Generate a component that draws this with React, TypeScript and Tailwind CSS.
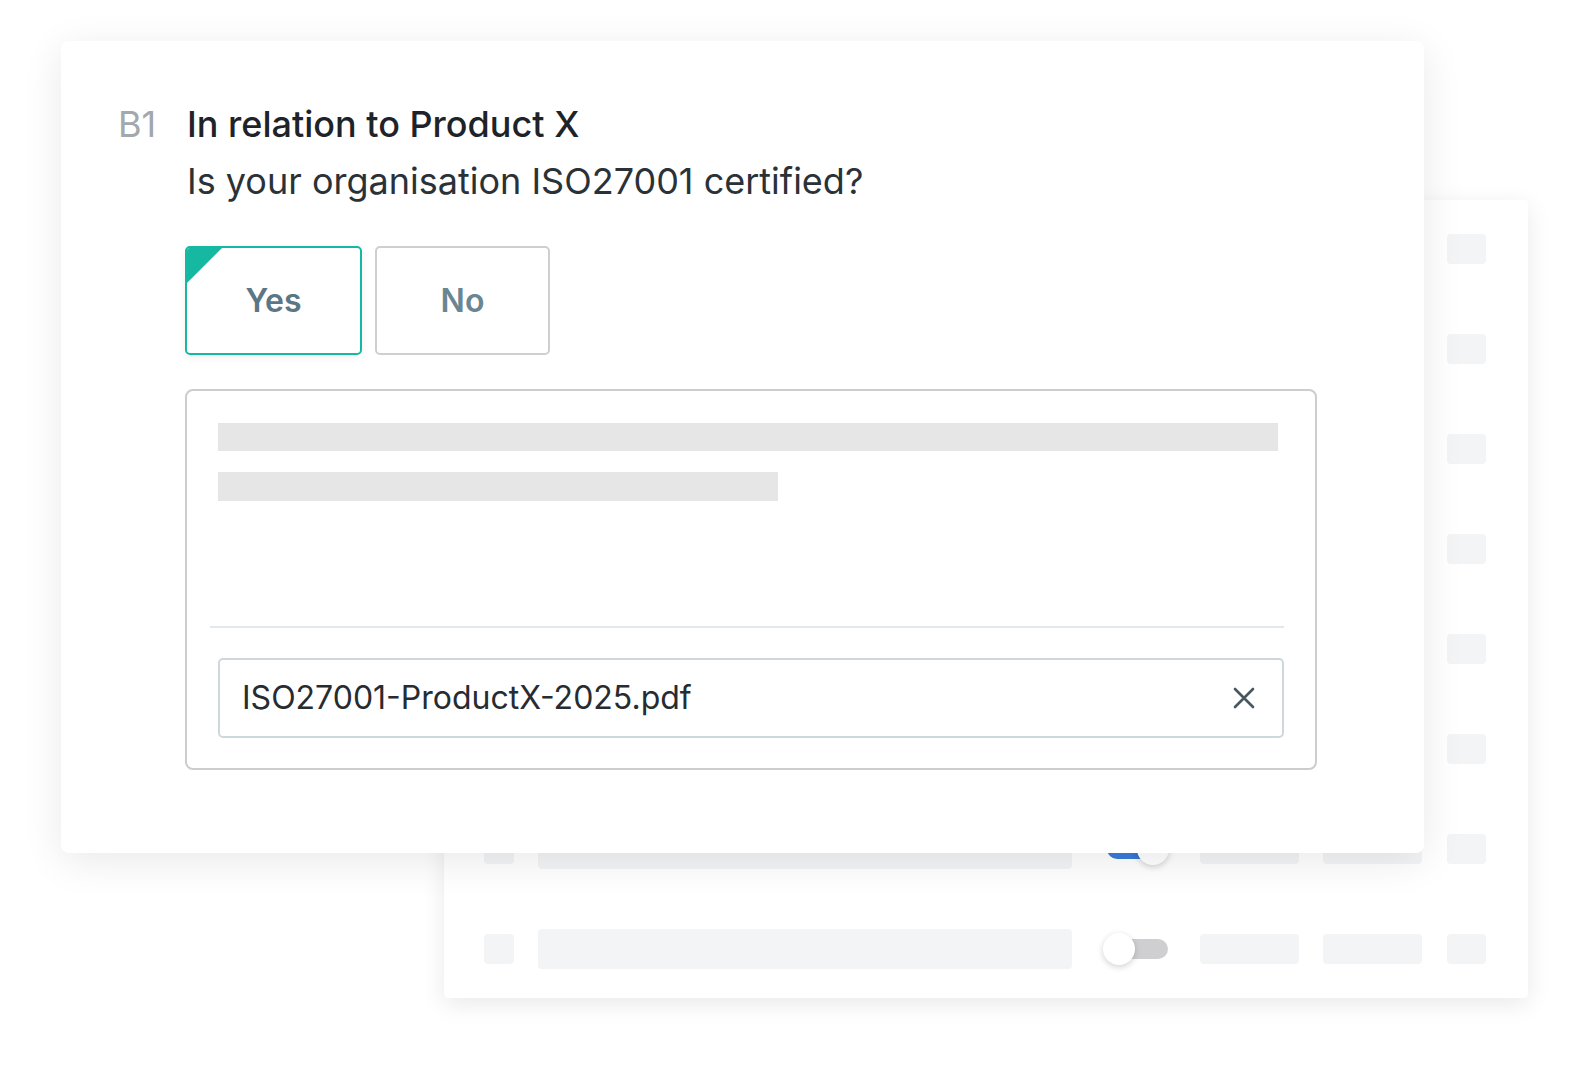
import React from "react";

function BackRow({ on = false }: { on?: boolean }) {
  return (
    <div className="flex h-[40px] items-center">
      <div className="ml-[40px] h-[30px] w-[30px] rounded-[4px] bg-[#f3f4f5]" />
      <div className="ml-[24px] h-[40px] w-[534px] rounded-[4px] bg-[#f3f4f5]" />
      <div className="relative ml-[31px] h-[34px] w-[66px]">
        {on ? (
          <>
            <div className="absolute left-[4px] top-[7px] h-[20px] w-[52px] rounded-full bg-[#3a7bd9]" />
            <div className="absolute left-[34px] top-[1px] h-[32px] w-[32px] rounded-full bg-white shadow-[0_2px_6px_rgba(0,0,0,0.18)]" />
          </>
        ) : (
          <>
            <div className="absolute left-[16px] top-[7px] h-[20px] w-[49px] rounded-full bg-[#cfcfd2]" />
            <div className="absolute left-0 top-[1px] h-[32px] w-[32px] rounded-full bg-white shadow-[0_2px_6px_rgba(0,0,0,0.18)]" />
          </>
        )}
      </div>
      <div className="ml-[31px] h-[30px] w-[99px] rounded-[4px] bg-[#f3f4f5]" />
      <div className="ml-[24px] h-[30px] w-[99px] rounded-[4px] bg-[#f3f4f5]" />
      <div className="ml-[25px] h-[30px] w-[39px] rounded-[4px] bg-[#f3f4f5]" />
    </div>
  );
}

export default function App() {
  return (
    <div
      className="relative h-[1078px] w-[1588px] overflow-hidden bg-white"
      style={{ fontFamily: "Inter, 'Noto Sans', sans-serif" }}
    >
      {/* Back card */}
      <div className="absolute left-[444px] top-[200px] flex h-[798px] w-[1084px] flex-col gap-[60px] rounded-[4px] bg-white pt-[29px] shadow-[0_6px_24px_rgba(0,0,0,0.09)]">
        <BackRow />
        <BackRow />
        <BackRow />
        <BackRow />
        <BackRow />
        <BackRow />
        <BackRow on />
        <BackRow />
      </div>

      {/* Front card */}
      <div className="absolute left-[61px] top-[41px] flex h-[812px] w-[1363px] rounded-[8px] bg-white pl-[57px] pt-[62px] shadow-[0_8px_40px_rgba(0,0,0,0.09)]">
        <div className="w-[67px] text-[36px] leading-[42px] font-normal text-[#a2a8ad]">B1</div>
        <div className="flex flex-col">
          <div className="pl-[2px] text-[36px] leading-[42px] font-medium text-[#1d2329]">
            In relation to Product X
          </div>
          <div className="mt-[15px] pl-[2px] text-[36px] leading-[42px] font-normal text-[#2a3238]">
            Is your organisation ISO27001 certified?
          </div>

          <div className="mt-[44px] flex gap-[13px]">
            <button className="relative flex h-[109px] w-[177px] items-center justify-center overflow-hidden rounded-[5px] border-2 border-[#17b8a1] bg-white text-[32px] font-semibold text-[#5b7684] shadow-[0_3px_8px_rgba(0,0,0,0.06)]">
              <span
                className="absolute left-0 top-0 h-[35px] w-[35px] bg-[#17b8a1]"
                style={{ clipPath: "polygon(0 0, 100% 0, 0 100%)" }}
              />
              Yes
            </button>
            <button className="flex h-[109px] w-[175px] items-center justify-center rounded-[5px] border-2 border-[#cfcfcf] bg-white text-[32px] font-semibold text-[#6a8692]">
              No
            </button>
          </div>

          <div className="mt-[34px] flex w-[1132px] flex-col rounded-[8px] border-2 border-[#cdcdcd] bg-white pb-[30px]">
            <div className="ml-[31px] mt-[32px] h-[28px] w-[1060px] bg-[#e6e6e6]" />
            <div className="ml-[31px] mt-[21px] h-[29px] w-[560px] bg-[#e6e6e6]" />
            <div className="ml-[23px] mt-[125px] h-[2px] w-[1074px] bg-[#e1e9ec]" />
            <div className="ml-[31px] mt-[30px] flex h-[80px] w-[1066px] items-center justify-between rounded-[5px] border-2 border-[#cdd8dd] pl-[22px] pr-[26px]">
              <span className="text-[32px] text-[#262c31]">ISO27001-ProductX-2025.pdf</span>
              <svg width="24" height="24" viewBox="0 0 24 24" fill="none">
                <path d="M3 3L21 21M21 3L3 21" stroke="#485861" strokeWidth="2.6" strokeLinecap="round" />
              </svg>
            </div>
          </div>
        </div>
      </div>
    </div>
  );
}
